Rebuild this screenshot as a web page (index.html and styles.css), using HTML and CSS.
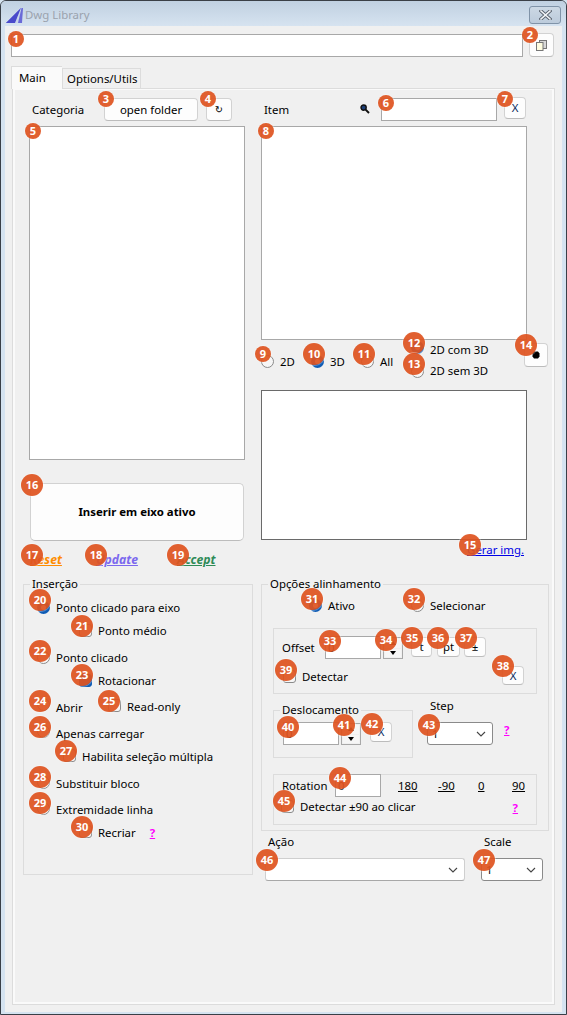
FILE: index.html
```html
<!DOCTYPE html>
<html lang="pt">
<head>
<meta charset="utf-8">
<title>Dwg Library</title>
<link rel="stylesheet" href="styles.css">
</head>
<body>
<div class="window">
  <header class="titlebar">
    <svg class="app-icon" width="17" height="15" viewBox="0 0 17 15"><path d="M0 15 L15 0 L17 0 L16 15 Z" fill="#6a6ad8"/><path d="M0 15 L15 0 L9 15 Z" fill="#4a4acb"/><path d="M9 15 L15 0 L15.5 0 L12 15 Z" fill="#c9d6ea"/></svg>
    <span class="title-text">Dwg Library</span>
    <div class="close-btn"><svg width="13" height="10" viewBox="0 0 13 10"><path d="M2 1 L11 9 M11 1 L2 9" stroke="#59626e" stroke-width="3.4" stroke-linecap="square"/><path d="M2 1 L11 9 M11 1 L2 9" stroke="#f4f6f8" stroke-width="1.6" stroke-linecap="square"/></svg></div>
  </header>
  <div class="client">
    <div class="path-row">
      <input class="field path-input" type="text">
      <button class="btn copy-btn"><svg width="11" height="11" viewBox="0 0 11 11"><rect x="3.5" y="0.5" width="7" height="8" fill="#d8d8d8" stroke="#777"/><rect x="0.5" y="2.5" width="6.5" height="8" fill="#fffde0" stroke="#777"/></svg></button>
    </div>
    <div class="tabs">
      <div class="tab tab-active">Main</div>
      <div class="tab">Options/Utils</div>
    </div>
    <div class="panel">
      <div class="page">
        <div class="top">
          <section class="col-left">
            <div class="head">
              <span class="head-label cat-label">Categoria</span>
              <button class="btn open-btn">open folder</button>
              <button class="btn refresh-btn">↻</button>
            </div>
            <div class="listbox cat-list"></div>
            <button class="btn insert-btn">Inserir em eixo ativo</button>
            <div class="actions">
              <a class="act act-reset">Reset</a>
              <a class="act act-update">Update</a>
              <a class="act act-accept">Accept</a>
            </div>
          </section>
          <section class="col-right">
            <div class="head">
              <span class="head-label item-label">Item</span>
              <svg class="search-icon" width="10" height="10" viewBox="0 0 10 10"><circle cx="3.6" cy="3.6" r="2.6" fill="#1c3f78" stroke="#111" stroke-width="1.4"/><path d="M5.6 5.6 L9 9" stroke="#111" stroke-width="2"/></svg>
              <input class="field search-input" type="text">
              <button class="btn x-btn search-clear">X</button>
            </div>
            <div class="listbox item-list"></div>
            <div class="filter-row">
              <label class="opt f-2d"><input class="rb" type="radio" name="kind"><span>2D</span></label>
              <label class="opt f-3d"><input class="rb" type="radio" name="kind" checked><span>3D</span></label>
              <label class="opt f-all"><input class="rb" type="radio" name="kind"><span>All</span></label>
              <div class="filter-stack">
                <label class="opt line t1"><input class="rb" type="radio" name="sub" checked><span>2D com 3D</span></label>
                <label class="opt line t-2"><input class="rb" type="radio" name="sub"><span>2D sem 3D</span></label>
              </div>
              <button class="btn dot-btn"><svg width="8" height="8" viewBox="0 0 8 8"><path d="M2 0.5 H6 L7.5 2.5 V5.5 L6 7.5 H2 L0.5 5.5 V2.5 Z" fill="#000"/></svg></button>
            </div>
            <div class="preview"></div>
            <div class="gerar"><a class="gerar-link">Gerar img.</a></div>
          </section>
        </div>
        <div class="bottom">
          <fieldset class="group insert-group">
            <legend>Inserção</legend>
            <label class="opt line first"><input class="rb" type="radio" name="mode" checked><span>Ponto clicado para eixo</span></label>
            <label class="opt line g10 in-42"><input class="cb" type="checkbox"><span>Ponto médio</span></label>
            <label class="opt line g14"><input class="rb" type="radio" name="mode"><span>Ponto clicado</span></label>
            <label class="opt line g10 in-42"><input class="cb" type="checkbox" checked><span>Rotacionar</span></label>
            <div class="line g11 abrir-row">
              <label class="opt abrir t2"><input class="rb" type="radio" name="mode"><span>Abrir</span></label>
              <label class="opt readonly t0"><input class="cb" type="checkbox"><span>Read-only</span></label>
            </div>
            <label class="opt line g14 t1"><input class="rb" type="radio" name="mode"><span>Apenas carregar</span></label>
            <label class="opt line g11 in-26 t0"><input class="cb" type="checkbox"><span>Habilita seleção múltipla</span></label>
            <label class="opt line g14 t0"><input class="rb" type="radio" name="mode"><span>Substituir bloco</span></label>
            <label class="opt line g13 t0"><input class="rb" type="radio" name="mode"><span>Extremidade linha</span></label>
            <div class="line g10 in-42 recriar-row">
              <label class="opt t0"><input class="cb" type="checkbox"><span>Recriar</span></label>
              <a class="help">?</a>
            </div>
          </fieldset>
          <div class="col-align">
            <fieldset class="group align-group">
              <legend>Opções alinhamento</legend>
              <div class="ativo-row">
                <label class="opt ativo"><input class="rb" type="radio" name="al" checked><span>Ativo</span></label>
                <label class="opt"><input class="rb" type="radio" name="al"><span>Selecionar</span></label>
              </div>
              <div class="box offset-box">
                <div class="offset-row">
                  <span class="offset-label">Offset</span>
                  <input class="field num-input" type="text" value="0">
                  <div class="spin"><span class="spin-up"></span><span class="spin-down"></span></div>
                  <button class="btn small s-t">t</button>
                  <button class="btn small s-pt">pt</button>
                  <button class="btn small s-pm">±</button>
                </div>
                <div class="detect-row">
                  <label class="opt detect"><input class="cb" type="checkbox"><span>Detectar</span></label>
                  <button class="btn x-btn offset-clear">X</button>
                </div>
              </div>
              <div class="move-row">
                <fieldset class="group move-group">
                  <legend>Deslocamento</legend>
                  <div class="move-inner">
                    <input class="field num-input" type="text" value="0">
                    <div class="spin"><span class="spin-up"></span><span class="spin-down"></span></div>
                    <button class="btn x-btn move-clear">X</button>
                  </div>
                </fieldset>
                <div class="step-col">
                  <span class="cap">Step</span>
                  <div class="select select-dark step-select"><span>1</span><svg width="10" height="6" viewBox="0 0 10 6"><path d="M1 1 L5 5 L9 1" fill="none" stroke="#444" stroke-width="1.1"/></svg></div>
                </div>
                <a class="help step-help">?</a>
              </div>
              <div class="box rotation-box">
                <div class="rot-row">
                  <span class="rot-label">Rotation</span>
                  <input class="field rot-input" type="text" value="0">
                  <a class="rot-link r-180">180</a>
                  <a class="rot-link r-m90">-90</a>
                  <a class="rot-link r-0">0</a>
                  <a class="rot-link">90</a>
                </div>
                <div class="rot-check">
                  <label class="opt"><input class="cb" type="checkbox"><span>Detectar ±90 ao clicar</span></label>
                  <a class="help">?</a>
                </div>
              </div>
            </fieldset>
            <div class="action-row">
              <div class="action-col">
                <span class="cap">Ação</span>
                <div class="select select-light action-select"><span></span><svg width="10" height="6" viewBox="0 0 10 6"><path d="M1 1 L5 5 L9 1" fill="none" stroke="#444" stroke-width="1.1"/></svg></div>
              </div>
              <div class="scale-col">
                <span class="cap">Scale</span>
                <div class="select select-dark scale-select"><span>1</span><svg width="10" height="6" viewBox="0 0 10 6"><path d="M1 1 L5 5 L9 1" fill="none" stroke="#444" stroke-width="1.1"/></svg></div>
              </div>
            </div>
          </div>
        </div>
      </div>
    </div>
  </div>
</div>
<div class="badges">
  <span class="badge s b1">1</span><span class="badge s b2">2</span><span class="badge s b3">3</span><span class="badge s b4">4</span><span class="badge s b5">5</span><span class="badge s b6">6</span><span class="badge s b7">7</span><span class="badge s b8">8</span><span class="badge s b9">9</span><span class="badge b10">10</span>
  <span class="badge b11">11</span><span class="badge b12">12</span><span class="badge b13">13</span><span class="badge b14">14</span><span class="badge b15">15</span><span class="badge b16">16</span><span class="badge b17">17</span><span class="badge b18">18</span><span class="badge b19">19</span><span class="badge b20">20</span>
  <span class="badge b21">21</span><span class="badge b22">22</span><span class="badge b23">23</span><span class="badge b24">24</span><span class="badge b25">25</span><span class="badge b26">26</span><span class="badge b27">27</span><span class="badge b28">28</span><span class="badge b29">29</span><span class="badge b30">30</span>
  <span class="badge b31">31</span><span class="badge b32">32</span><span class="badge b33">33</span><span class="badge b34">34</span><span class="badge b35">35</span><span class="badge b36">36</span><span class="badge b37">37</span><span class="badge b38">38</span><span class="badge b39">39</span><span class="badge b40">40</span>
  <span class="badge b41">41</span><span class="badge b42">42</span><span class="badge b43">43</span><span class="badge b44">44</span><span class="badge b45">45</span><span class="badge b46">46</span><span class="badge b47">47</span>
</div>
</body>
</html>
```
FILE: styles.css
```css
* { box-sizing: border-box; }
html, body { margin: 0; padding: 0; }
body {
  position: relative;
  width: 567px;
  height: 1015px;
  overflow: hidden;
  font: 11.4px/16px "Noto Sans", "Open Sans", sans-serif;
  color: #000;
  background: #d5e3f0;
}
button, input { font: inherit; color: inherit; margin: 0; }

.window {
  width: 567px;
  height: 1015px;
  display: flex;
  flex-direction: column;
  padding: 0 4px 2px;
  border: 1px solid #3a3f47;
  border-radius: 6px 6px 0 0;
  background: #d5e3f0;
}
.titlebar {
  height: 25px;
  flex: none;
  margin: 0 -4px;
  padding: 0 5px 0 5px;
  display: flex;
  align-items: center;
  background: linear-gradient(180deg, #c0d0e1, #d6e3f0);
  border-radius: 5px 5px 0 0;
}
.app-icon { margin-top: 3px; }
.title-text { margin: 2px 0 0 2px; font-size: 11.4px; color: #9aa2ad; }
.close-btn {
  margin-left: auto;
  width: 32px;
  height: 18px;
  margin-top: 2px;
  display: flex;
  align-items: center;
  justify-content: center;
  border: 1px solid #8093a8;
  border-radius: 3px;
  background: linear-gradient(180deg, #ccd8e4, #bccbdb);
}
.client {
  flex: 1;
  background: #f0f0f0;
  padding: 7px 0 0 6px;
}

.btn {
  background: #fdfdfd;
  border: 1px solid #d2d2d2;
  border-bottom-color: #bcbcbc;
  border-radius: 4px;
  padding: 0;
  display: flex;
  align-items: center;
  justify-content: center;
  flex: none;
}
.field {
  background: #fff;
  border: 1px solid #a8a8a8;
  border-radius: 0;
  padding: 0 2px;
  outline: none;
  flex: none;
}

.path-row { display: flex; height: 24px; }
.path-input { width: 512px; height: 23px; margin-top: 1px; }
.copy-btn { width: 25px; height: 24px; margin-left: 6px; }

.tabs { display: flex; height: 22px; margin-top: 9px; position: relative; z-index: 1; }
.tab {
  width: 79px;
  height: 20px;
  margin-top: 2px;
  padding-left: 4px;
  background: #f0f0f0;
  border: 1px solid #dcdcdc;
  border-bottom: 0;
  line-height: 20px;
  white-space: nowrap;
}
.tab-active {
  width: 51px;
  height: 23px;
  margin-top: 0;
  padding-left: 7px;
  background: #fafafa;
  border-right: 0;
  line-height: 21px;
}

.panel {
  width: 543px;
  height: 917px;
  margin-left: 1px;
  padding: 1px 2px 2px;
  background: #fafafa;
  border: 1px solid #dcdcdc;
}
.page { height: 100%; background: #f0f0f0; padding-top: 7px; }

.top { display: flex; gap: 16px; margin-left: 14px; }
.col-left { width: 216px; }
.col-right { width: 287px; }
.head { display: flex; align-items: flex-start; height: 24px; }
.head-label { line-height: 26px; padding-left: 3px; }
.cat-label { width: 75px; }
.open-btn { width: 94px; height: 23px; margin-top: 1px; }
.refresh-btn { width: 26px; height: 23px; margin-top: 1px; margin-left: 8px; font-family: "DejaVu Sans", sans-serif; font-size: 10px; }
.listbox { background: #fff; border: 1px solid #a8a8a8; margin-top: 5px; }
.cat-list { width: 216px; height: 334px; }
.item-list { width: 266px; height: 214px; }
.insert-btn {
  width: 214px;
  height: 58px;
  margin: 23px 0 0 1px;
  font-weight: 700;
  border-radius: 5px;
}
.actions {
  display: grid;
  grid-template-columns: 66px 81px auto;
  margin: 11px 0 0 1px;
}
.act { font-size: 12.2px; font-weight: 700; font-style: italic; text-decoration: underline; }
.act-reset { color: #ff8c00; }
.act-update { color: #7b68ee; }
.act-accept { color: #2e8b57; }

.item-label { width: 99px; }
.search-icon { margin-top: 7px; }
.search-input { width: 116px; height: 23px; margin-top: 1px; margin-left: 11px; }
.x-btn { width: 22px; height: 20px; color: #0b2a5c; }
.search-clear { height: 22px; margin-left: 7px; }

.opt { display: flex; align-items: flex-start; gap: 6px; white-space: nowrap; height: 13px; }
.opt > span { line-height: 16px; margin-top: -1px; }
.opt.t0 > span { margin-top: 0; }
.opt.t1 > span { margin-top: 1px; }
.opt.t2 > span { margin-top: 2px; }
.opt.t-2 > span { margin-top: -2px; }
.rb, .cb {
  appearance: none;
  -webkit-appearance: none;
  flex: none;
  width: 13px;
  height: 13px;
  margin: 0;
  background: #f6f6f6;
  border: 1px solid #8a8a8a;
}
.rb { border-radius: 50%; }
.cb { border-radius: 3px; }
.rb:checked { border: 4px solid #0f5cb5; background: #fff; }
.cb:checked { border-color: #0f5cb5; background: #0f5cb5; }

.filter-row { display: flex; height: 37px; margin-top: 1px; }
.f-2d, .f-3d, .f-all { margin-top: 14px; width: 50px; }
.filter-stack { display: flex; flex-direction: column; gap: 11px; }
.dot-btn { width: 24px; height: 24px; margin: 2px 0 0 auto; }
.preview { width: 266px; height: 150px; margin-top: 12px; background: #fff; border: 1px solid #6a6a6a; }
.gerar { margin-top: 2px; padding-right: 24px; text-align: right; }
.gerar-link { color: #0000e6; text-decoration: underline; }

.bottom { display: flex; gap: 8px; margin: 8px 0 0 8px; }
.group {
  margin: 0;
  padding: 0;
  min-width: 0;
  border: 1px solid #dcdcdc;
}
.group > legend { margin-left: 6px; padding: 0 2px; line-height: 16px; }
.insert-group { width: 230px; height: 299px; padding-left: 13px; }
.insert-group > legend { margin-left: -7px; }
.line { height: 13px; }
.first { margin-top: 9px; }
.g10 { margin-top: 10px; }
.g11 { margin-top: 11px; }
.g13 { margin-top: 13px; }
.g14 { margin-top: 14px; }
.in-42 { margin-left: 42px; }
.in-26 { margin-left: 26px; }
.abrir-row { display: flex; align-items: flex-start; }
.abrir { width: 71px; }
.readonly { margin-top: 1px; }
.recriar-row { display: flex; gap: 14px; }
.help { color: #f0f; font-weight: 700; text-decoration: underline; line-height: 16px; }
.recriar-row .help { margin-top: 0; }

.col-align { width: 288px; }
.align-group { width: 288px; height: 255px; }
.ativo-row { display: flex; height: 13px; margin: 7px 0 0 47px; }
.ativo { width: 102px; }
.box { border: 1px solid #dcdcdc; margin-left: 11px; width: 264px; }
.offset-box { height: 66px; margin-top: 16px; padding: 7px 12px 0 8px; }
.offset-row { display: flex; align-items: flex-start; height: 23px; }
.offset-label { width: 43px; line-height: 24px; }
.num-input { width: 56px; height: 23px; }
.spin {
  width: 20px;
  height: 22px;
  margin: 1px 0 0 2px;
  padding: 1px;
  display: flex;
  flex-direction: column;
  gap: 1px;
  flex: none;
  border: 1px solid #a8a8a8;
}
.spin span {
  flex: 1;
  display: flex;
  align-items: center;
  justify-content: center;
  background: #f6f6f6;
}
.spin-up::before, .spin-down::before {
  content: "";
  border-left: 3.5px solid transparent;
  border-right: 3.5px solid transparent;
}
.spin-up::before { border-bottom: 4px solid #000; }
.spin-down::before { border-top: 4px solid #000; }
.small { height: 20px; margin-top: 1px; }
.s-t { width: 21px; margin-left: 8px; }
.s-pt { width: 23px; margin-left: 5px; }
.s-pm { width: 22px; margin-left: 4px; }
.detect-row { display: flex; align-items: flex-start; height: 19px; margin-top: 7px; }
.detect { margin: 4px 0 0 1px; }
.offset-clear { margin-left: auto; height: 19px; }

.move-row { display: flex; align-items: flex-start; margin: 4px 0 0 11px; }
.move-group { width: 140px; height: 56px; margin-top: 4px; flex: none; }
.move-inner { display: flex; align-items: flex-start; padding: 4px 0 0 9px; }
.move-clear { margin-left: 9px; }
.step-col { margin-left: 14px; }
.cap { display: block; padding-left: 3px; line-height: 16px; }
.select {
  display: flex;
  align-items: center;
  justify-content: space-between;
  height: 23px;
  padding: 0 6px 0 4px;
  background: #fff;
  border-radius: 3px;
}
.select-dark { border: 1px solid #8a8a8a; }
.select-light { border: 1px solid #cfcfcf; border-bottom-color: #a8a8a8; }
.step-select { width: 66px; margin-top: 8px; }
.step-help { margin: 24px 0 0 11px; }

.rotation-box { height: 51px; margin-top: 16px; padding: 0 18px 0 8px; }
.rot-row { display: flex; align-items: flex-start; height: 22px; }
.rot-label { width: 53px; line-height: 22px; flex: none; }
.rot-input { width: 46px; height: 23px; margin-top: -1px; }
.rot-link { color: #000; text-decoration: underline; line-height: 22px; flex: none; }
.r-180 { width: 40px; margin-left: 17px; }
.r-m90 { width: 40px; }
.r-0 { width: 34px; }
.rot-check { display: flex; justify-content: space-between; margin: 3px 0 0 -1px; }

.action-row { display: flex; gap: 16px; margin: 3px 0 0 4px; }
.action-col { width: 200px; }
.scale-col { width: 62px; }
.action-row .select { margin-top: 8px; }

.badges { position: absolute; left: 0; top: 0; }
.badge {
  position: absolute;
  width: 22px;
  height: 22px;
  transform: translate(-50%, -50%);
  border-radius: 50%;
  background: rgba(223, 84, 32, 0.93);
  box-shadow: 0 0 0 1px rgba(255, 255, 255, 0.3);
  color: #fff;
  font: 700 11px/22px "Noto Sans", sans-serif;
  text-align: center;
}
.badge.s { width: 16px; height: 16px; line-height: 16px; }
.b1 { left: 16px; top: 39px; }
.b2 { left: 530px; top: 35px; }
.b3 { left: 106px; top: 99px; }
.b4 { left: 208px; top: 99px; }
.b5 { left: 33px; top: 131px; }
.b6 { left: 386px; top: 103px; }
.b7 { left: 505px; top: 99px; }
.b8 { left: 266px; top: 131px; }
.b9 { left: 263px; top: 354px; }
.b10 { left: 314px; top: 354px; }
.b11 { left: 364px; top: 354px; }
.b12 { left: 414px; top: 343px; }
.b13 { left: 414px; top: 364px; }
.b14 { left: 526px; top: 345px; }
.b15 { left: 470px; top: 545px; }
.b16 { left: 32px; top: 485px; }
.b17 { left: 32px; top: 555px; }
.b18 { left: 96px; top: 555px; }
.b19 { left: 178px; top: 555px; }
.b20 { left: 40px; top: 600px; }
.b21 { left: 82px; top: 626px; }
.b22 { left: 40px; top: 651px; }
.b23 { left: 82px; top: 675px; }
.b24 { left: 40px; top: 701px; }
.b25 { left: 109px; top: 701px; }
.b26 { left: 40px; top: 727px; }
.b27 { left: 66px; top: 751px; }
.b28 { left: 40px; top: 777px; }
.b29 { left: 40px; top: 803px; }
.b30 { left: 82px; top: 827px; }
.b31 { left: 312px; top: 599px; }
.b32 { left: 414px; top: 599px; }
.b33 { left: 330px; top: 641px; }
.b34 { left: 386px; top: 640px; }
.b35 { left: 412px; top: 638px; }
.b36 { left: 438px; top: 638px; }
.b37 { left: 466px; top: 638px; }
.b38 { left: 503px; top: 666px; }
.b39 { left: 286px; top: 670px; }
.b40 { left: 288px; top: 727px; }
.b41 { left: 344px; top: 725px; }
.b42 { left: 372px; top: 724px; }
.b43 { left: 429px; top: 725px; }
.b44 { left: 340px; top: 778px; }
.b45 { left: 284px; top: 801px; }
.b46 { left: 267px; top: 860px; }
.b47 { left: 484px; top: 860px; }
```
